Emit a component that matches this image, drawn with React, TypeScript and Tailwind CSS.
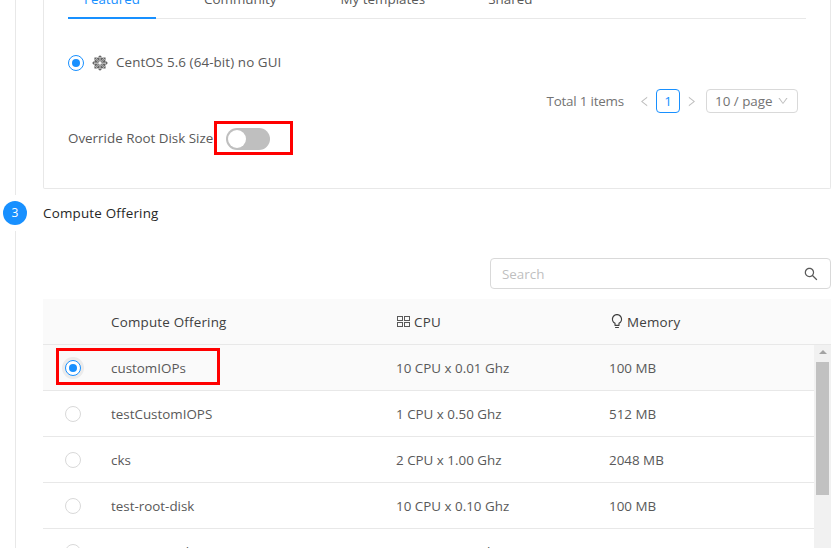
import { AiOutlineBulb, AiOutlineDown, AiOutlineLeft, AiOutlineRight, AiOutlineSearch } from 'react-icons/ai'
import { FaCentos } from 'react-icons/fa'

const offerings = [
  { name: 'customIOPs', cpu: '10 CPU x 0.01 Ghz', memory: '100 MB', selected: true },
  { name: 'testCustomIOPS', cpu: '1 CPU x 0.50 Ghz', memory: '512 MB' },
  { name: 'cks', cpu: '2 CPU x 1.00 Ghz', memory: '2048 MB' },
  { name: 'test-root-disk', cpu: '10 CPU x 0.10 Ghz', memory: '100 MB' },
  { name: 'TestRootDiskSize', cpu: '1 CPU x 1.00 Ghz', memory: '1024 MB' },
]

function Radio({ checked, halo }: { checked?: boolean; halo?: boolean }) {
  return (
    <span
      className={`flex h-4 w-4 items-center justify-center rounded-full border bg-white ${
        checked ? 'border-[#1890ff]' : 'border-[#d9d9d9]'
      } ${halo ? 'shadow-[0_0_0_3px_#ebebeb]' : ''}`}
    >
      {checked && <span className="h-2 w-2 rounded-full bg-[#1890ff]" />}
    </span>
  )
}

function CpuIcon() {
  return (
    <svg width="14" height="14" viewBox="0 0 14 14" fill="none" stroke="#595959" strokeWidth="1">
      <rect x="1.5" y="2.5" width="5" height="4" />
      <rect x="8.5" y="2.5" width="5" height="4" />
      <rect x="1.5" y="8.5" width="5" height="4" />
      <rect x="8.5" y="8.5" width="5" height="4" />
    </svg>
  )
}

export default function App() {
  return (
    <div className="relative h-[548px] w-[839px] overflow-hidden bg-white font-['Open_Sans',sans-serif] text-[13.4px] text-[#595959]">
      {/* step 2, the top of it is scrolled out of the window */}
      <div className="-mt-[22px] flex">
        <div className="ml-[15px] h-[217px] w-px bg-[#e8e8e8]" />
        <div className="ml-[27px] h-[211px] w-[788px] rounded-b-[2px] border border-t-0 border-[#e8e8e8] pl-6 pr-6">
          <div className="flex h-[41px] w-[738px] border-b border-[#e8e8e8]">
            <div className="-mb-px flex h-[41px] w-[88px] justify-center border-b-2 border-[#1890ff] pt-[11px] text-[#1890ff]">
              Featured
            </div>
            <div className="ml-8 px-4 pt-[11px]">Community</div>
            <div className="ml-8 px-4 pt-[11px]">My templates</div>
            <div className="ml-[31px] px-4 pt-[11px]">Shared</div>
          </div>

          <div className="mt-[34px] flex h-5 items-center">
            <Radio checked />
            <FaCentos className="ml-[7px] text-[18px] text-[#666666]" />
            <span className="-mt-[2px] ml-[7px] tracking-[0.1px]">CentOS 5.6 (64-bit) no GUI</span>
          </div>

          <div className="mt-[16px] flex h-6 items-center justify-end pr-[8px] text-[#737373]">
            <span className="tracking-[-0.2px]">Total 1 items</span>
            <AiOutlineLeft className="ml-[14px] text-[13px] text-[#bfbfbf]" />
            <span className="ml-[5px] flex h-6 w-6 items-center justify-center rounded-[4px] border border-[#1890ff] text-[#1890ff]">
              1
            </span>
            <AiOutlineRight className="ml-[5px] text-[13px] text-[#bfbfbf]" />
            <span className="ml-[8px] flex h-6 w-[92px] items-center rounded-[4px] border border-[#d9d9d9] pl-2">
              10 / page
              <AiOutlineDown className="ml-[4px] text-[12px] text-[#bfbfbf]" />
            </span>
          </div>

          <div className="mt-[15px] flex h-[22px] items-start">
            <span className="w-[158px]">Override Root Disk Size</span>
            <span className="flex h-[22px] w-[44px] items-center rounded-full bg-[#bfbfbf] pl-[2px]">
              <span className="h-[18px] w-[18px] rounded-full bg-white" />
            </span>
          </div>
        </div>
      </div>

      {/* step 3 */}
      <div className="mt-[6px] flex">
        <div className="flex w-[43px] shrink-0 flex-col">
          <span className="ml-[3px] flex h-6 w-6 items-center justify-center rounded-full bg-[#1890ff] text-xs text-white">
            3
          </span>
          <div className="ml-[15px] mt-[6px] h-[320px] w-px bg-[#e8e8e8]" />
        </div>

        <div className="w-[788px]">
          <div className="flex h-6 items-center font-medium tracking-[0.2px] text-[#262626]">Compute Offering</div>

          <div className="mt-[33px] flex justify-end">
            <div className="flex h-[31px] w-[341px] items-center justify-between rounded-[4px] border border-[#d9d9d9] pl-[11px] pr-[11px]">
              <span className="pt-[2px] text-[#bfbfbf]">Search</span>
              <AiOutlineSearch className="text-[16px] text-[#595959]" />
            </div>
          </div>

          <div className="mt-[10px] flex h-[46px] items-center border-b border-[#e8e8e8] bg-[#fafafa] font-medium tracking-[0.2px] text-[#404040]">
            <span className="ml-[68px] w-[285px] pt-[2px]">Compute Offering</span>
            <span className="flex w-[213px] items-center gap-[4px]">
              <CpuIcon />
              <span className="pt-[2px]">CPU</span>
            </span>
            <span className="flex items-center gap-[2px]">
              <AiOutlineBulb className="text-[16px]" />
              <span className="pt-[2px]">Memory</span>
            </span>
          </div>

          <div className="flex">
            <div className="w-[771px]">
              {offerings.map((o) => (
                <div
                  key={o.name}
                  className={`flex h-[46px] items-center border-b border-[#e8e8e8] ${o.selected ? 'bg-[#fafafa]' : ''}`}
                >
                  <span className="ml-[22px] w-[46px]">
                    <Radio checked={o.selected} halo={o.selected} />
                  </span>
                  <span className="w-[285px] pt-[2px]">{o.name}</span>
                  <span className="w-[213px] pt-[2px]">{o.cpu}</span>
                  <span className="pt-[2px]">{o.memory}</span>
                </div>
              ))}
            </div>
            <div className="relative h-[230px] w-[17px] bg-[#f1f1f1]">
              <span className="absolute left-[5px] top-[5px] h-0 w-0 border-x-[4px] border-b-[4px] border-x-transparent border-b-[#a3a3a3]" />
              <span className="absolute left-[2px] top-[17px] h-[133px] w-[13px] bg-[#c1c1c1]" />
            </div>
          </div>
        </div>
      </div>

      {/* red markers drawn over the screenshot */}
      <div className="absolute left-[214px] top-[121px] h-[34px] w-[79px] border-[3px] border-[#ff0000]" />
      <div className="absolute left-[56px] top-[348px] h-[37px] w-[164px] border-[3px] border-[#ff0000]" />
    </div>
  )
}
